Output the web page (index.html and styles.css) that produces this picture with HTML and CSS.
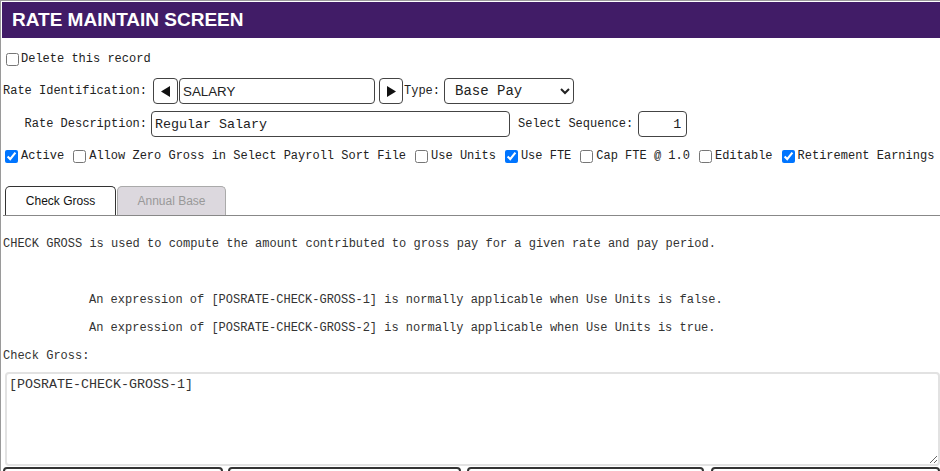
FILE: index.html
```html
<!DOCTYPE html>
<html lang="en">
<head>
    <meta charset="UTF-8">
    <meta name="viewport" content="width=device-width, initial-scale=1.0">
    <title>Rate Maintain Screen</title>
    <link rel="stylesheet" href="styles.css">
</head>
<body>
    <div class="screen">
        <div class="title">RATE MAINTAIN SCREEN</div>

        <div class="form">
            <div class="row delete-row">
                <label><input type="checkbox">Delete this record</label>
            </div>

            <div class="row field-row first">
                <span class="label">Rate Identification:</span>
                <button class="nav-btn prev" title="Previous">
                    <svg width="10" height="11" viewBox="0 0 10 11"><polygon points="9,0 9,11 0,5.5" fill="#111"/></svg>
                </button>
                <input type="text" class="ident" value="SALARY">
                <button class="nav-btn next" title="Next">
                    <svg width="10" height="11" viewBox="0 0 10 11"><polygon points="1,0 1,11 10,5.5" fill="#111"/></svg>
                </button>
                <span class="type-label">Type:</span>
                <select class="type-select">
                    <option selected>Base Pay</option>
                    <option>Overtime</option>
                    <option>Stipend</option>
                </select>
            </div>

            <div class="row field-row">
                <span class="label">Rate Description:</span>
                <input type="text" class="desc" value="Regular Salary">
                <span class="seq-label">Select Sequence:</span>
                <input type="text" class="seq" value="1">
            </div>

            <div class="row flags">
                <label><input type="checkbox" checked>Active</label>
                <label><input type="checkbox">Allow Zero Gross in Select Payroll Sort File</label>
                <label><input type="checkbox">Use Units</label>
                <label><input type="checkbox" checked>Use FTE</label>
                <label><input type="checkbox">Cap FTE @ 1.0</label>
                <label><input type="checkbox">Editable</label>
                <label><input type="checkbox" checked>Retirement Earnings</label>
            </div>

            <div class="tabs">
                <div class="tab active">Check Gross</div>
                <div class="tab">Annual Base</div>
            </div>

            <div class="tab-body">
                <p>CHECK GROSS is used to compute the amount contributed to gross pay for a given rate and pay period.</p>
                <p>&nbsp;</p>
                <p class="indent">An expression of [POSRATE-CHECK-GROSS-1] is normally applicable when Use Units is false.</p>
                <p class="indent">An expression of [POSRATE-CHECK-GROSS-2] is normally applicable when Use Units is true.</p>
                <p>Check Gross:</p>
                <textarea class="expr">[POSRATE-CHECK-GROSS-1]</textarea>
            </div>

            <div class="actions">
                <button class="act w1"></button>
                <button class="act w2"></button>
                <button class="act w3"></button>
                <button class="act w4"></button>
            </div>
        </div>
    </div>
</body>
</html>
```

FILE: styles.css
```css
* {
    box-sizing: border-box;
}

body {
    margin: 0;
    font-family: "Liberation Mono", "DejaVu Sans Mono", monospace;
    font-size: 12px;
    color: #222;
    background: #fff;
    overflow: hidden;
}

.screen {
    border-top: 1px solid #9a9a9a;
    border-left: 1px solid #9a9a9a;
    padding: 1px 0 0 1px;
}

.title {
    height: 36px;
    line-height: 36px;
    padding-left: 10px;
    background-color: #411c67;
    color: #fff;
    font-family: "Liberation Sans", Arial, sans-serif;
    font-size: 19px;
    font-weight: bold;
}

.form {
    padding-left: 1px;
}

.row {
    display: flex;
    align-items: center;
    white-space: nowrap;
}

.delete-row {
    height: 24px;
    margin-top: 9px;
}

.delete-row input[type="checkbox"] {
    margin-left: 3px;
    margin-right: 2px;
}

label {
    display: inline-flex;
    align-items: center;
    white-space: pre;
}

input[type="checkbox"] {
    width: 13px;
    height: 13px;
    margin: 0 3px 0 3px;
}

.field-row {
    height: 26px;
    margin-top: 7px;
}

.field-row.first {
    margin-top: 7px;
}

.label {
    width: 144px;
    text-align: right;
    flex: none;
}

input[type="text"], select {
    height: 26px;
    border: 1px solid #444;
    border-radius: 4px;
    background: #fff;
    color: #222;
    font-family: "Liberation Mono", monospace;
    font-size: 13.33px;
    padding: 0 3px;
    outline: none;
}

.nav-btn {
    width: 24px;
    height: 26px;
    padding: 0;
    border: 1px solid #444;
    border-radius: 4px;
    background: #fff;
    display: flex;
    align-items: center;
    justify-content: center;
}

.prev {
    margin-left: 6px;
    width: 25px;
}

input.ident {
    margin-left: 1px;
    width: 196px;
    font-family: "Liberation Sans", Arial, sans-serif;
}

.next {
    margin-left: 4px;
}

.type-label {
    margin-left: 1px;
}

.type-select {
    margin-left: 4px;
    width: 130px;
    padding-left: 6px;
    font-size: 14px;
}

.desc {
    margin-left: 4px;
    width: 359px;
}

.seq-label {
    margin-left: 8px;
}

input.seq {
    margin-left: 5px;
    width: 49px;
    text-align: right;
    padding-right: 5px;
}

.flags {
    height: 24px;
    margin-top: 7px;
}

.flags input[type="checkbox"] {
    margin-left: 2px;
}

.flags label + label {
    margin-left: 7px;
}

.tabs {
    display: flex;
    margin-top: 18px;
    padding-left: 2px;
    border-bottom: 1px solid #888;
    gap: 1px;
}

.tab {
    height: 29px;
    line-height: 28px;
    text-align: center;
    font-family: "Liberation Sans", Arial, sans-serif;
    font-size: 12px;
    border: 1px solid #aaa;
    border-bottom: none;
    border-radius: 5px 5px 0 0;
    background: #dcd8de;
    color: #999;
    width: 109px;
}

.tab.active {
    width: 111px;
    background: #fff;
    color: #111;
    border-color: #333;
}

.tab-body {
    padding-top: 14px;
}

.tab-body p {
    margin: 0;
    line-height: 28px;
    color: #333;
}

.tab-body .indent {
    padding-left: 86px;
}

.expr {
    display: block;
    margin: 2px 0 0 2px;
    width: calc(100% - 2px);
    height: 94px;
    padding: 3px 2px;
    border: 2px solid #e2e2e2;
    border-radius: 4px;
    font-family: "Liberation Mono", monospace;
    font-size: 13.33px;
    color: #333;
    outline: none;
}

.actions {
    display: flex;
    margin-top: 1px;
}

.act {
    height: 30px;
    border: 2px solid #333;
    border-radius: 4px;
    background: #fff;
}

.w1 { width: 220px; }
.w2 { width: 234px; margin-left: 5px; }
.w3 { width: 237px; margin-left: 6px; }
.w4 { width: 230px; margin-left: 7px; }
```
